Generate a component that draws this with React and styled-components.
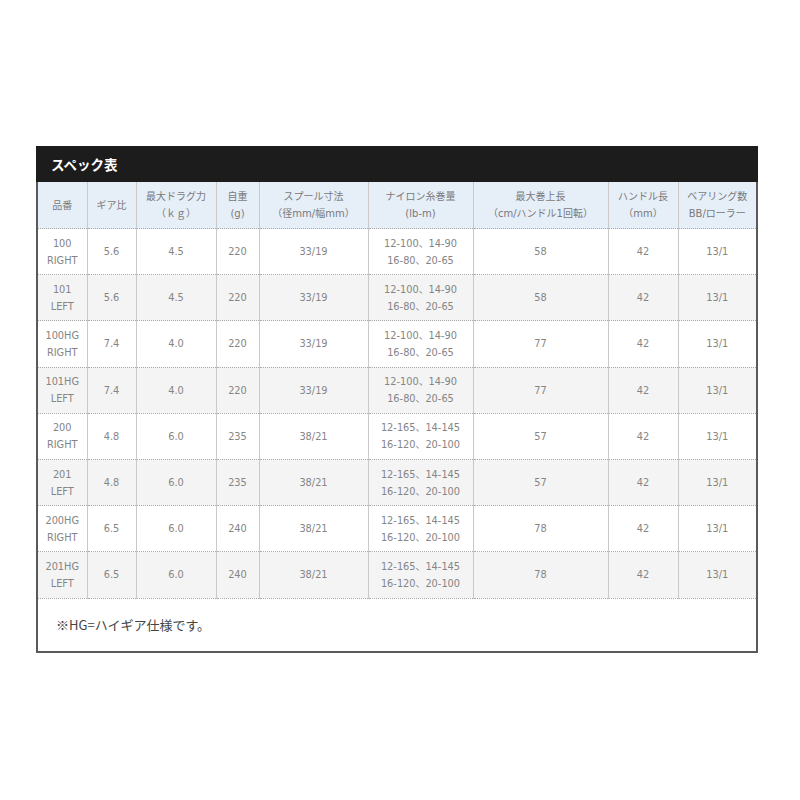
import React from "react";
import styled, { createGlobalStyle } from "styled-components";

const GlobalStyle = createGlobalStyle`
  html, body {
    margin: 0;
    padding: 0;
    background: #ffffff;
    font-family: "Noto Sans CJK JP", "Noto Sans", sans-serif;
  }
`;

const Page = styled.div`
  width: 800px;
  height: 800px;
  padding: 146px 0 0 36px;
  box-sizing: border-box;
`;

const SpecBox = styled.div`
  width: 722px;
  box-sizing: border-box;
  border: 2px solid #5a5a5a;
  border-top: none;
  background: #fff;
`;

const TitleBar = styled.div`
  height: 36px;
  margin: 0 -2px;
  background: #1c1c1c;
  color: #fff;
  font-weight: 700;
  font-size: 13.5px;
  display: flex;
  align-items: center;
  padding-left: 15px;
`;

const Table = styled.table`
  width: 718px;
  border-collapse: collapse;
  table-layout: fixed;
`;

const Th = styled.th`
  background: #e6eef8;
  color: #7a7a7a;
  font-family: "DejaVu Sans", "Noto Sans CJK JP", sans-serif;
  font-weight: 400;
  font-size: 10px;
  line-height: 17px;
  height: 46px;
  padding: 0;
  text-align: center;
  border-left: 1px solid #c9c9c9;
  border-bottom: 1px dotted #aaa;
  &:first-child { border-left: none; }
`;

const Tr = styled.tr`
  background: ${(p) => (p.$alt ? "#f4f4f4" : "#ffffff")};
`;

const Td = styled.td`
  color: #858585;
  font-family: "DejaVu Sans", "Noto Sans CJK JP", sans-serif;
  font-size: 9.8px;
  line-height: 17px;
  height: 45.2px;
  padding: 0;
  text-align: center;
  border-left: 1px solid #c9c9c9;
  border-bottom: 1px dotted #aaa;
  &:first-child { border-left: none; }
`;

const Note = styled.div`
  height: 52px;
  display: flex;
  align-items: center;
  padding-left: 18px;
  font-size: 13px;
  color: #444;
`;

const widths = [49, 49, 80, 43, 109, 105, 135, 70, 78];

const heads = [
  ["品番"],
  ["ギア比"],
  ["最大ドラグ力", "（ｋｇ）"],
  ["自重", "(g)"],
  ["スプール寸法", "（径mm/幅mm）"],
  ["ナイロン糸巻量", "(lb-m)"],
  ["最大巻上長", "（cm/ハンドル1回転）"],
  ["ハンドル長", "（mm）"],
  ["ベアリング数", "BB/ローラー"],
];

const lineA = ["12-100、14-90", "16-80、20-65"];
const lineB = ["12-165、14-145", "16-120、20-100"];

const rows = [
  [["100", "RIGHT"], "5.6", "4.5", "220", "33/19", lineA, "58", "42", "13/1"],
  [["101", "LEFT"], "5.6", "4.5", "220", "33/19", lineA, "58", "42", "13/1"],
  [["100HG", "RIGHT"], "7.4", "4.0", "220", "33/19", lineA, "77", "42", "13/1"],
  [["101HG", "LEFT"], "7.4", "4.0", "220", "33/19", lineA, "77", "42", "13/1"],
  [["200", "RIGHT"], "4.8", "6.0", "235", "38/21", lineB, "57", "42", "13/1"],
  [["201", "LEFT"], "4.8", "6.0", "235", "38/21", lineB, "57", "42", "13/1"],
  [["200HG", "RIGHT"], "6.5", "6.0", "240", "38/21", lineB, "78", "42", "13/1"],
  [["201HG", "LEFT"], "6.5", "6.0", "240", "38/21", lineB, "78", "42", "13/1"],
];

const Lines = ({ value }) =>
  Array.isArray(value)
    ? value.map((v, i) => (
        <React.Fragment key={i}>
          {i > 0 && <br />}
          {v}
        </React.Fragment>
      ))
    : value;

export default function App() {
  return (
    <Page>
      <GlobalStyle />
      <SpecBox>
        <TitleBar>スペック表</TitleBar>
        <Table>
          <colgroup>
            {widths.map((w, i) => (
              <col key={i} style={{ width: w }} />
            ))}
          </colgroup>
          <thead>
            <tr>
              {heads.map((h, i) => (
                <Th key={i}>
                  <Lines value={h} />
                </Th>
              ))}
            </tr>
          </thead>
          <tbody>
            {rows.map((r, i) => (
              <Tr key={i} $alt={i % 2 === 1}>
                {r.map((c, j) => (
                  <Td key={j}>
                    <Lines value={c} />
                  </Td>
                ))}
              </Tr>
            ))}
          </tbody>
        </Table>
        <Note>※HG=ハイギア仕様です。</Note>
      </SpecBox>
    </Page>
  );
}
